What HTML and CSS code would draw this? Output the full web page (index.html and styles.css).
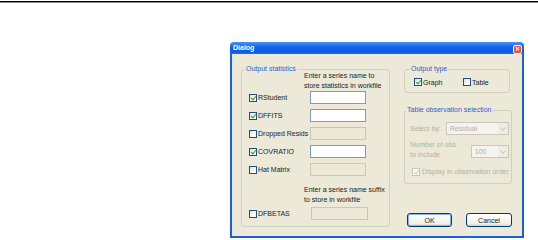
FILE: index.html
```html
<!DOCTYPE html>
<html lang="en">
<head>
    <meta charset="UTF-8">
    <title>Dialog</title>
    <link rel="stylesheet" href="styles.css">
</head>
<body>
    <div class="topline"></div>

    <div class="dialog">
        <div class="titlebar">
            <span class="title">Dialog</span>
            <span class="close">&#x2715;</span>
        </div>

        <div class="dlg-body">
            <fieldset class="group stats">
                <legend>Output statistics</legend>
                <div class="note">Enter a series name to<br>store statistics in workfile</div>
                <div class="rows">
                    <label class="chk"><span class="box on"></span>RStudent</label>
                    <span class="field"></span>
                    <label class="chk"><span class="box on"></span>DFFITS</label>
                    <span class="field"></span>
                    <label class="chk"><span class="box"></span>Dropped Resids</label>
                    <span class="field off"></span>
                    <label class="chk"><span class="box on"></span>COVRATIO</label>
                    <span class="field"></span>
                    <label class="chk"><span class="box"></span>Hat Matrix</label>
                    <span class="field off"></span>
                </div>
                <div class="note suffix">Enter a series name suffix<br>to store in workfile</div>
                <div class="rows single">
                    <label class="chk"><span class="box"></span>DFBETAS</label>
                    <span class="field off"></span>
                </div>
            </fieldset>

            <div class="side">
                <fieldset class="group outtype">
                    <legend>Output type</legend>
                    <div class="type-row">
                        <label class="chk graph"><span class="box on"></span>Graph</label>
                        <label class="chk"><span class="box"></span>Table</label>
                    </div>
                </fieldset>

                <fieldset class="group tablesel">
                    <legend>Table observation selection</legend>
                    <div class="sel-row">
                        <span class="dim">Select by:</span>
                        <span class="combo wide">Residual<span class="arrow"></span></span>
                    </div>
                    <div class="sel-row obs">
                        <span class="dim">Number of obs<br>to include</span>
                        <span class="combo narrow">100<span class="arrow"></span></span>
                    </div>
                    <label class="chk dim order"><span class="box on dis"></span>Display in observation order</label>
                </fieldset>

                <div class="buttons">
                    <button class="btn default">OK</button>
                    <button class="btn">Cancel</button>
                </div>
            </div>
        </div>
    </div>
</body>
</html>
```

FILE: styles.css
```css
body {
    margin: 0;
    padding: 0;
    background-color: #ffffff;
    font-family: "Liberation Sans", Arial, sans-serif;
    font-size: 7px;
    color: #222222;
}

.topline {
    height: 1px;
    margin-top: 1px;
    background-color: #000000;
    box-shadow: 0 1px 0 #8a8a8a;
}

.dialog {
    width: 294px;
    margin: 40px 0 0 230px;
}

.titlebar {
    display: flex;
    justify-content: space-between;
    align-items: center;
    height: 12px;
    padding: 0 2px 0 3px;
    background: linear-gradient(#4a93f5, #1565ea 40%, #0b5ce4 80%, #2169e8);
    border-radius: 4px 4px 0 0;
}

.title {
    color: #ffffff;
    font-weight: bold;
    font-size: 7px;
    line-height: 12px;
}

.close {
    width: 9px;
    height: 9px;
    margin-top: 2px;
    box-sizing: border-box;
    border: 1px solid #ffffff;
    border-radius: 2px;
    background-color: #e2533c;
    color: #ffffff;
    font-size: 6px;
    line-height: 7px;
    text-align: center;
    font-weight: bold;
}

.dlg-body {
    display: flex;
    height: 184px;
    padding: 11px 0 0 9px;
    box-sizing: border-box;
    background-color: #ece9d8;
    border: 2px solid #1560e6;
    border-top: none;
}

.group {
    margin: 0;
    padding: 0;
    box-sizing: border-box;
    border: 1px solid #d0d0bf;
    border-radius: 3px;
}

.group legend {
    padding: 0 1px;
    margin-left: -4px;
    color: #2a5fd2;
    font-size: 7px;
    line-height: 8px;
}

.stats {
    width: 149px;
    height: 162px;
    padding-left: 7px;
}

.note {
    margin: -2px 0 0 55px;
    line-height: 10px;
    white-space: nowrap;
}

.note.suffix {
    margin-top: 9px;
}

.rows {
    display: grid;
    grid-template-columns: 61px 56px;
    grid-auto-rows: 13px;
    row-gap: 5px;
}

.rows.single {
    margin-top: 2px;
    grid-template-columns: 62px 57px;
}

.chk {
    display: flex;
    align-items: center;
    gap: 1px;
    white-space: nowrap;
}

.box {
    width: 8px;
    height: 8px;
    box-sizing: border-box;
    border: 1px solid #1c5180;
    background: linear-gradient(135deg, #dcdcd6, #ffffff 70%);
    position: relative;
}

.box.on::after {
    content: "";
    position: absolute;
    left: 1.5px;
    top: 0px;
    width: 2px;
    height: 4px;
    border: solid #21a121;
    border-width: 0 1.5px 1.5px 0;
    transform: rotate(40deg);
}

.box.dis {
    border-color: #c9c7ba;
    background: #ffffff;
}

.box.dis::after {
    border-color: #c9c7ba;
}

.field {
    box-sizing: border-box;
    border: 1px solid #7f9db9;
    background-color: #ffffff;
}

.field.off {
    border-color: #c9c7ba;
    background-color: #ece9d8;
}

.side {
    display: flex;
    flex-direction: column;
    width: 108px;
    margin-left: 14px;
}

.outtype {
    width: 106px;
    height: 28px;
    padding-left: 9px;
}

.type-row {
    display: flex;
    margin-top: 5px;
}

.graph {
    width: 49px;
}

.tablesel {
    width: 107px;
    height: 78px;
    margin-top: 13px;
    padding: 0 2px 0 5px;
}

.dim {
    color: #b3b0a2;
    line-height: 10px;
}

.sel-row {
    display: flex;
    justify-content: space-between;
    align-items: center;
    margin-top: 8px;
}

.sel-row.obs {
    margin-top: 5px;
}

.combo {
    display: flex;
    justify-content: space-between;
    align-items: center;
    height: 13px;
    box-sizing: border-box;
    padding-left: 3px;
    border: 1px solid #c9c7ba;
    background-color: #f4f3ee;
    color: #b3b0a2;
}

.combo.wide {
    width: 63px;
}

.combo.narrow {
    width: 38px;
    margin-top: 2px;
}

.arrow {
    width: 10px;
    height: 11px;
    background-color: #eeede5;
    position: relative;
}

.arrow::after {
    content: "";
    position: absolute;
    left: 3px;
    top: 3px;
    width: 3px;
    height: 3px;
    border: solid #c9c7ba;
    border-width: 0 1px 1px 0;
    transform: rotate(45deg);
}

.order {
    margin-top: 7px;
    margin-left: 2px;
    gap: 2px;
}

.buttons {
    display: flex;
    justify-content: flex-end;
    gap: 14px;
    margin-top: 29px;
}

.btn {
    width: 45px;
    height: 14px;
    padding: 0;
    font-family: "Liberation Sans", Arial, sans-serif;
    font-size: 7px;
    color: #222222;
    border: 1px solid #003c74;
    border-radius: 3px;
    background: linear-gradient(#ffffff, #f0f0ea 80%, #d6d0c5);
}

.btn + .btn {
    width: 46px;
}

.btn.default {
    box-shadow: inset 0 0 0 1px #8cb4f2;
}
```
